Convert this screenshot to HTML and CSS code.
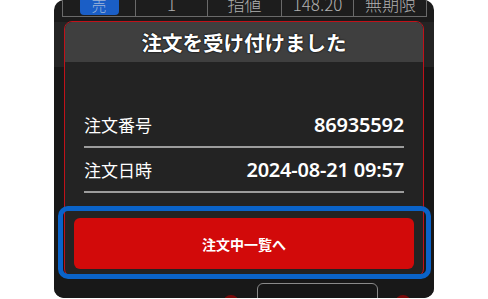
FILE: index.html
```html
<!DOCTYPE html>
<html lang="ja">
<head>
<meta charset="utf-8">
<link rel="stylesheet" href="styles.css">
</head>
<body>
<div class="phone">
  <div class="order-table">
    <div class="cell"><span class="badge">売</span></div>
    <div class="cell">1</div>
    <div class="cell">指値</div>
    <div class="cell">148.20</div>
    <div class="cell">無期限</div>
  </div>
  <div class="strip"></div>
  <div class="main"></div>
  <div class="bottom-bar">
    <span class="dot dot-a"></span>
    <span class="outline-btn"></span>
    <span class="dot dot-b"></span>
  </div>

  <div class="modal">
    <div class="modal-header">注文を受け付けました</div>
    <div class="modal-body">
      <div class="row"><span class="label">注文番号</span><span class="value">86935592</span></div>
      <div class="row"><span class="label">注文日時</span><span class="value">2024-08-21 09:57</span></div>
    </div>
    <div class="btn-wrap">
      <button class="primary">注文中一覧へ</button>
    </div>
  </div>
</div>
</body>
</html>
```

FILE: styles.css
```css
* { box-sizing: border-box; }
html, body { margin: 0; padding: 0; background: #fff; }
body {
  font-family: "Noto Sans CJK JP", "Noto Sans", sans-serif;
  height: 299px;
  overflow: hidden;
}
.phone {
  position: relative;
  margin-left: 54px;
  width: 380px;
  height: 298px;
  background: #1b1b1b;
  border-radius: 10px;
  overflow: hidden;
  display: flex;
  flex-direction: column;
}
.order-table {
  display: grid;
  grid-template-columns: 73px 72px 74px 72px 73px;
  margin: -8px 0 0 8px;
  width: 365px;
  height: 25px;
  border: 1px solid #6a6a6a;
  border-top: none;
  background: #1d1d1d;
}
.cell {
  border-right: 1px solid #6a6a6a;
  color: #b0b0b0;
  font-family: "Noto Sans CJK JP", "Noto Sans", sans-serif;
  font-size: 17px;
  font-weight: 300;
  line-height: 24px;
  text-align: center;
  display: flex;
  justify-content: center;
  align-items: center;
}
.cell:last-child { border-right: none; }
.badge {
  display: block;
  width: 39px;
  height: 21px;
  background: #1a5ec6;
  border-radius: 4px;
  color: #9fb6d8;
  font-size: 15px;
  line-height: 21px;
}
.strip {
  height: 50px;
  background: #242424;
  border-top: 5px solid #1b1b1b;
}
.main {
  flex: 1;
  background: #181818;
}
.bottom-bar {
  height: 15px;
  background: #181818;
  display: flex;
  align-items: flex-start;
  padding-left: 169px;
}
.dot {
  width: 16px;
  height: 16px;
  border-radius: 50%;
  background: #7a0a0a;
  margin-top: 12px;
}
.outline-btn {
  width: 121px;
  height: 24px;
  margin-left: 18px;
  margin-right: 17px;
  border: 1.5px solid #8a8a8a;
  border-radius: 6px;
  background: #161616;
}
.modal {
  position: absolute;
  left: 10px;
  top: 21px;
  width: 360px;
  height: 256px;
  border: 1px solid #c0121a;
  border-radius: 8px;
  background: #232323;
  display: flex;
  flex-direction: column;
}
.modal-header {
  height: 40px;
  background: #3f3f3f;
  border-radius: 7px 7px 0 0;
  color: #fff;
  font-weight: 700;
  font-size: 20.5px;
  line-height: 40px;
  text-align: center;
  text-shadow: 0 0 2px #000, 0 0 1px #000;
}
.modal-body {
  padding: 41px 19px 0 19px;
}
.row {
  height: 45px;
  display: flex;
  justify-content: space-between;
  align-items: center;
  border-bottom: 2px solid #9c9c9c;
  color: #fff;
}
.label {
  font-size: 17px;
  font-weight: 400;
}
.value {
  font-family: "Noto Sans", sans-serif;
  font-size: 20px;
  font-weight: 600;
  letter-spacing: -0.2px;
}
.btn-wrap {
  position: relative;
  margin: 25px 9px 0 9px;
}
.btn-wrap::after {
  content: "";
  position: absolute;
  top: -12px;
  left: -16px;
  right: -17px;
  bottom: -10px;
  border: 5px solid #0a63c9;
  border-radius: 10px;
}
.primary {
  display: block;
  width: 100%;
  height: 51px;
  border: none;
  border-radius: 6px;
  background: #d20a0a;
  color: #fff;
  font-family: "Noto Sans CJK JP", sans-serif;
  font-weight: 700;
  font-size: 14px;
  padding: 0;
}
```
